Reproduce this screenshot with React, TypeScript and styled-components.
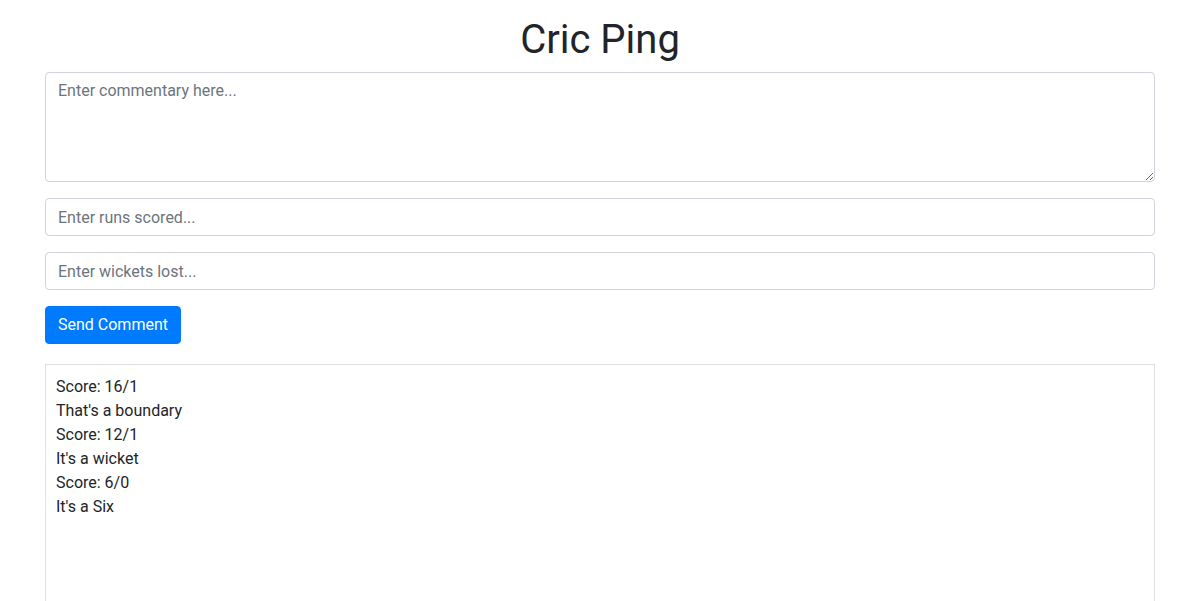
import styled, { createGlobalStyle } from "styled-components";

const GlobalStyle = createGlobalStyle`
  body {
    margin: 0;
    background: #fff;
    font-family: Roboto, "Helvetica Neue", Arial, sans-serif;
    font-size: 16px;
    line-height: 1.5;
    color: #212529;
  }
  * {
    box-sizing: border-box;
  }
`;

const Container = styled.div`
  width: 1110px;
  margin-left: 45px;
  padding-top: 16px;
`;

const Title = styled.h1`
  margin: 0 0 8px;
  text-align: center;
  font-size: 40px;
  font-weight: 400;
  line-height: 1.2;
`;

const Form = styled.form`
  display: flex;
  flex-direction: column;
  align-items: flex-start;
  gap: 16px;
`;

const fieldStyles = `
  display: block;
  width: 100%;
  padding: 6px 12px;
  font-family: inherit;
  font-size: 16px;
  line-height: 1.5;
  color: #495057;
  background: #fff;
  border: 1px solid #ced4da;
  border-radius: 4px;
  outline: none;

  &::placeholder {
    color: #6c757d;
    opacity: 1;
  }
`;

const CommentArea = styled.textarea`
  ${fieldStyles}
  height: 110px;
  resize: vertical;
`;

const NumberField = styled.input`
  ${fieldStyles}
  height: 38px;
`;

const SendButton = styled.button`
  margin-top: 0;
  height: 38px;
  padding: 6px 12px;
  font-family: inherit;
  font-size: 16px;
  line-height: 1.5;
  color: #fff;
  background: #007bff;
  border: 1px solid #007bff;
  border-radius: 4px;
  cursor: pointer;
`;

const Feed = styled.div`
  margin-top: 20px;
  height: 400px;
  padding: 10px;
  border: 1px solid #dee2e6;
`;

const FeedLine = styled.div`
  font-size: 16px;
  line-height: 24px;
`;

const lines = [
  "Score: 16/1",
  "That's a boundary",
  "Score: 12/1",
  "It's a wicket",
  "Score: 6/0",
  "It's a Six",
];

export default function App() {
  return (
    <>
      <GlobalStyle />
      <Container>
        <Title>Cric Ping</Title>
        <Form onSubmit={(e) => e.preventDefault()}>
          <CommentArea placeholder="Enter commentary here..." />
          <NumberField placeholder="Enter runs scored..." />
          <NumberField placeholder="Enter wickets lost..." />
          <SendButton type="submit">Send Comment</SendButton>
        </Form>
        <Feed>
          {lines.map((line, i) => (
            <FeedLine key={i}>{line}</FeedLine>
          ))}
        </Feed>
      </Container>
    </>
  );
}
